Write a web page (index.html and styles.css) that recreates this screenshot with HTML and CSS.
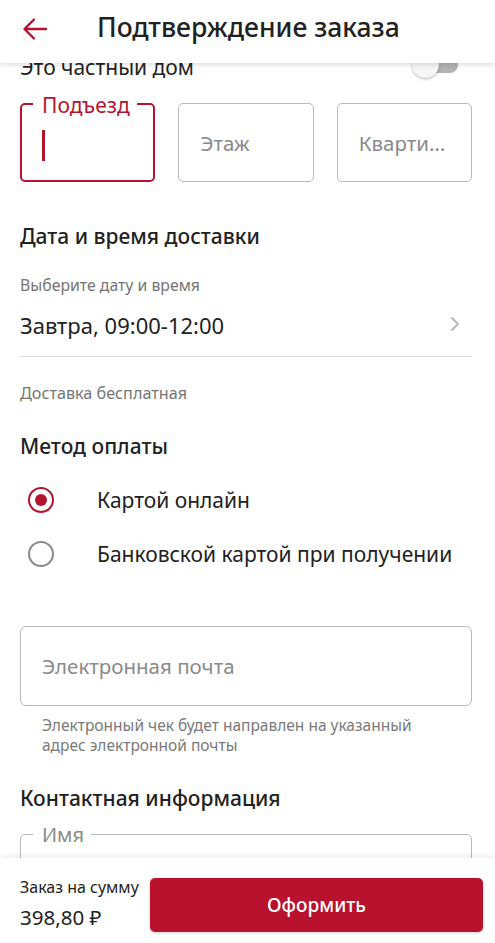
FILE: index.html
```html
<!DOCTYPE html>
<html lang="ru">
<head>
  <meta charset="UTF-8">
  <title>Подтверждение заказа</title>
  <link rel="stylesheet" href="styles.css">
</head>
<body>
  <div class="screen">
    <header class="topbar">
      <button class="back" aria-label="Назад">
        <svg width="26" height="24" viewBox="0 0 26 24">
          <path d="M24 12H3M12 2.5L2.5 12L12 21.5" fill="none" stroke="#b5142f" stroke-width="2.4" stroke-linecap="round" stroke-linejoin="round"/>
        </svg>
      </button>
      <h1>Подтверждение заказа</h1>
    </header>

    <main class="content">
      <div class="private-row">
        <span>Это частный дом</span>
        <span class="switch"><span class="thumb"></span></span>
      </div>

      <div class="address-grid">
        <div class="field active">
          <span class="field-label">Подъезд</span>
          <span class="cursor"></span>
        </div>
        <div class="field">
          <span class="placeholder">Этаж</span>
        </div>
        <div class="field">
          <span class="placeholder">Квартира</span>
        </div>
      </div>

      <h2 class="section-title first">Дата и время доставки</h2>
      <div class="hint">Выберите дату и время</div>
      <div class="date-row">
        <span>Завтра, 09:00-12:00</span>
        <svg class="chevron" width="10" height="16" viewBox="0 0 10 16">
          <path d="M2 2l6 6-6 6" fill="none" stroke="#bdbdbd" stroke-width="2.2" stroke-linecap="round" stroke-linejoin="round"/>
        </svg>
      </div>
      <div class="hint free">Доставка бесплатная</div>

      <h2 class="section-title pay">Метод оплаты</h2>
      <div class="radio-list">
        <label class="radio-row">
          <span class="radio checked"></span>
          <span>Картой онлайн</span>
        </label>
        <label class="radio-row">
          <span class="radio"></span>
          <span>Банковской картой при получении</span>
        </label>
      </div>

      <div class="email-box">
        <span class="placeholder">Электронная почта</span>
      </div>
      <p class="helper">Электронный чек будет направлен на указанный адрес электронной почты</p>

      <h2 class="section-title contact">Контактная информация</h2>
      <div class="field name-field">
        <span class="field-label grey">Имя</span>
      </div>
    </main>

    <footer class="checkout">
      <div class="total">
        <div class="total-label">Заказ на сумму</div>
        <div class="total-sum">398,80 ₽</div>
      </div>
      <button class="submit">Оформить</button>
    </footer>
  </div>
</body>
</html>
```

FILE: styles.css
```css
* {
  box-sizing: border-box;
}

body {
  margin: 0;
  font-family: "Noto Sans", "Open Sans", sans-serif;
  color: #222;
  background-color: white;
}

.screen {
  height: 943px;
  display: flex;
  flex-direction: column;
  overflow: hidden;
}

.topbar {
  position: relative;
  z-index: 2;
  height: 63px;
  flex-shrink: 0;
  display: flex;
  align-items: center;
  background-color: white;
  box-shadow: 0 2px 5px rgba(0, 0, 0, 0.13);
}

.back {
  width: 97px;
  height: 56px;
  border: none;
  background: none;
  padding: 0 0 0 22px;
  display: flex;
  align-items: center;
  margin-bottom: 6px;
}

.topbar h1 {
  margin: 0 0 9px;
  font-size: 26.5px;
  font-weight: 500;
  color: #222;
}

.content {
  flex: 1;
  overflow: hidden;
  padding: 0 23px 0 20px;
}

.private-row {
  margin-top: -16px;
  height: 40px;
  display: flex;
  align-items: center;
  justify-content: space-between;
  font-size: 21px;
}

.switch {
  position: relative;
  width: 36px;
  height: 16px;
  margin-right: 14px;
  margin-top: -4px;
  border-radius: 8px;
  background-color: #b4b4b4;
}

.switch .thumb {
  position: absolute;
  left: -10px;
  top: -6px;
  width: 27px;
  height: 27px;
  border-radius: 50%;
  background-color: #f6f6f6;
  box-shadow: 0 1px 3px rgba(0, 0, 0, 0.3);
}

.address-grid {
  margin-top: 16px;
  display: grid;
  grid-template-columns: repeat(3, 1fr);
  column-gap: 23px;
}

.field {
  position: relative;
  height: 79px;
  border: 1px solid #b9b9b9;
  border-radius: 5px;
  display: flex;
  align-items: center;
  padding: 0 22px 0 21px;
  min-width: 0;
}

.field.active {
  border: 2px solid #b5142f;
  padding-left: 20px;
}

.field-label {
  position: absolute;
  left: 11px;
  top: -10px;
  padding: 0 7px 0 9px;
  background-color: white;
  font-size: 21px;
  line-height: 20px;
  color: #b5142f;
}

.field-label.grey {
  color: #8a8a8a;
  left: 12px;
  font-size: 20px;
}

.cursor {
  width: 3px;
  height: 31px;
  margin-top: 6px;
  background-color: #b5142f;
}

.placeholder {
  font-size: 20.5px;
  color: #8a8a8a;
  white-space: nowrap;
  overflow: hidden;
  text-overflow: ellipsis;
}

.section-title {
  margin: 0;
  font-size: 21px;
  line-height: 28px;
  font-weight: 500;
  color: #222;
}

.section-title.first {
  margin-top: 40px;
}

.hint {
  margin-top: 25px;
  font-size: 15.8px;
  line-height: 20px;
  color: #757575;
}

.date-row {
  margin-top: 16px;
  padding-bottom: 17px;
  border-bottom: 1px solid #dedede;
  display: flex;
  align-items: center;
  justify-content: space-between;
  font-size: 22px;
  line-height: 28px;
}

.chevron {
  margin-right: 12px;
  margin-bottom: 3px;
}

.hint.free {
  margin-top: 26px;
  font-size: 16.2px;
}

.section-title.pay {
  margin-top: 29px;
}

.radio-list {
  margin-top: 13px;
}

.radio-row {
  height: 54px;
  display: flex;
  align-items: center;
  font-size: 21px;
}

.radio {
  width: 26px;
  height: 26px;
  margin: 0 43px 0 8px;
  border: 2.5px solid #8a8a8a;
  border-radius: 50%;
  display: flex;
  align-items: center;
  justify-content: center;
  flex-shrink: 0;
}

.radio.checked {
  border-color: #b5142f;
}

.radio.checked::after {
  content: "";
  width: 12px;
  height: 12px;
  border-radius: 50%;
  background-color: #b5142f;
}

.email-box {
  margin-top: 45px;
  height: 80px;
  border: 1px solid #b9b9b9;
  border-radius: 6px;
  display: flex;
  align-items: center;
  padding: 0 21px;
}

.helper {
  margin: 9px 0 0;
  padding: 0 20px 0 22px;
  font-size: 15.5px;
  line-height: 20px;
  color: #7a7a7a;
}

.section-title.contact {
  margin-top: 29px;
}

.name-field {
  margin-top: 22px;
}

.checkout {
  position: relative;
  z-index: 2;
  height: 85px;
  flex-shrink: 0;
  display: flex;
  align-items: center;
  padding: 8px 12px 0 20px;
  background-color: white;
  box-shadow: 0 -2px 6px rgba(0, 0, 0, 0.08);
}

.total {
  width: 130px;
}

.total-label {
  font-size: 16px;
  line-height: 22px;
  margin-top: -4px;
}

.total-sum {
  margin-top: 6px;
  font-size: 20.5px;
  line-height: 26px;
}

.submit {
  flex: 1;
  height: 54px;
  border: none;
  border-radius: 5px;
  background-color: #b9122e;
  color: white;
  font-family: inherit;
  font-size: 19px;
  font-weight: 500;
  box-shadow: 0 1px 3px rgba(0, 0, 0, 0.2);
}
```
